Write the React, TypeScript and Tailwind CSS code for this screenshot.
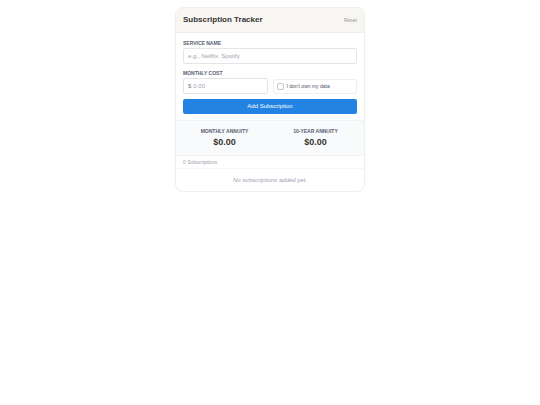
import { useState } from 'react';

const labelClass = 'block text-[5px] leading-[8px] font-bold uppercase text-[#596072]';

const stats = [
  { label: 'Monthly Annuity', value: '$0.00' },
  { label: '10-Year Annuity', value: '$0.00' },
];

export default function App() {
  const [name, setName] = useState('');
  const [cost, setCost] = useState('');
  const [noData, setNoData] = useState(false);

  const reset = () => {
    setName('');
    setCost('');
    setNoData(false);
  };

  return (
    <div className="px-4 py-[7px] font-['Liberation_Sans',Arial,sans-serif]">
      <main className="mx-auto max-w-[190px] overflow-hidden rounded-lg border border-[#eeeff1] bg-white">
        <header className="flex items-center justify-between border-b border-[#eeeeec] bg-[#f7f6f3] px-[7px] py-[6px]">
          <h1 className="text-[8px] leading-[12px] font-bold text-[#37352f]">
            Subscription Tracker
          </h1>
          <button
            type="button"
            onClick={reset}
            className="text-[5px] leading-[8px] text-[#9297a0]"
          >
            Reset
          </button>
        </header>

        <form
          className="space-y-[5px] px-[7px] py-[6px]"
          onSubmit={(e) => e.preventDefault()}
        >
          <div>
            <label htmlFor="service" className={labelClass}>
              Service Name
            </label>
            <input
              id="service"
              type="text"
              placeholder="e.g., Netflix, Spotify"
              value={name}
              onChange={(e) => setName(e.target.value)}
              className="mt-px block h-4 w-full rounded-[2px] border border-[#e3e5e9] px-1 text-[6px] text-[#37352f] outline-none placeholder:text-[#9ca3af]"
            />
          </div>

          <div className="grid grid-cols-2 items-end gap-[5px]">
            <div>
              <label htmlFor="cost" className={labelClass}>
                Monthly Cost
              </label>
              <div className="mt-px flex h-4 items-center gap-[2px] rounded-[2px] border border-[#e3e5e9] px-1 text-[6px]">
                <span className="text-[#7d8490]">$</span>
                <input
                  id="cost"
                  type="text"
                  inputMode="decimal"
                  placeholder="0.00"
                  value={cost}
                  onChange={(e) => setCost(e.target.value)}
                  className="w-full min-w-0 text-[#37352f] outline-none placeholder:text-[#9ca3af]"
                />
              </div>
            </div>
            <label className="flex h-[15px] items-center gap-[3px] rounded-[2px] border border-[#eeeff2] px-[3px] text-[5px] text-[#4b5563]">
              <input
                type="checkbox"
                checked={noData}
                onChange={(e) => setNoData(e.target.checked)}
                className="size-[7px] appearance-none rounded-[2px] border border-[#c4c7cc] bg-white checked:bg-[#2383e2]"
              />
              I don't own my data
            </label>
          </div>

          <button
            type="submit"
            className="block h-[15px] w-full rounded-[2px] bg-[#2383e2] text-[6px] text-white"
          >
            Add Subscription
          </button>
        </form>

        <section className="grid grid-cols-2 border-y border-[#f1f2f4] bg-[#f9fafb] px-[3px] py-[6px] text-center">
          {stats.map((stat) => (
            <div key={stat.label}>
              <h2 className={labelClass}>{stat.label}</h2>
              <p className="text-[9px] leading-[14px] font-bold text-[#37352f]">
                {stat.value}
              </p>
            </div>
          ))}
        </section>

        <p className="border-b border-[#f5f6f7] px-[7px] py-[2px] text-[5px] leading-[8px] text-[#9ca3af]">
          0 Subscriptions
        </p>
        <p className="py-[7px] text-center text-[6px] leading-[8px] text-[#9ca3af] italic">
          No subscriptions added yet.
        </p>
      </main>
    </div>
  );
}
